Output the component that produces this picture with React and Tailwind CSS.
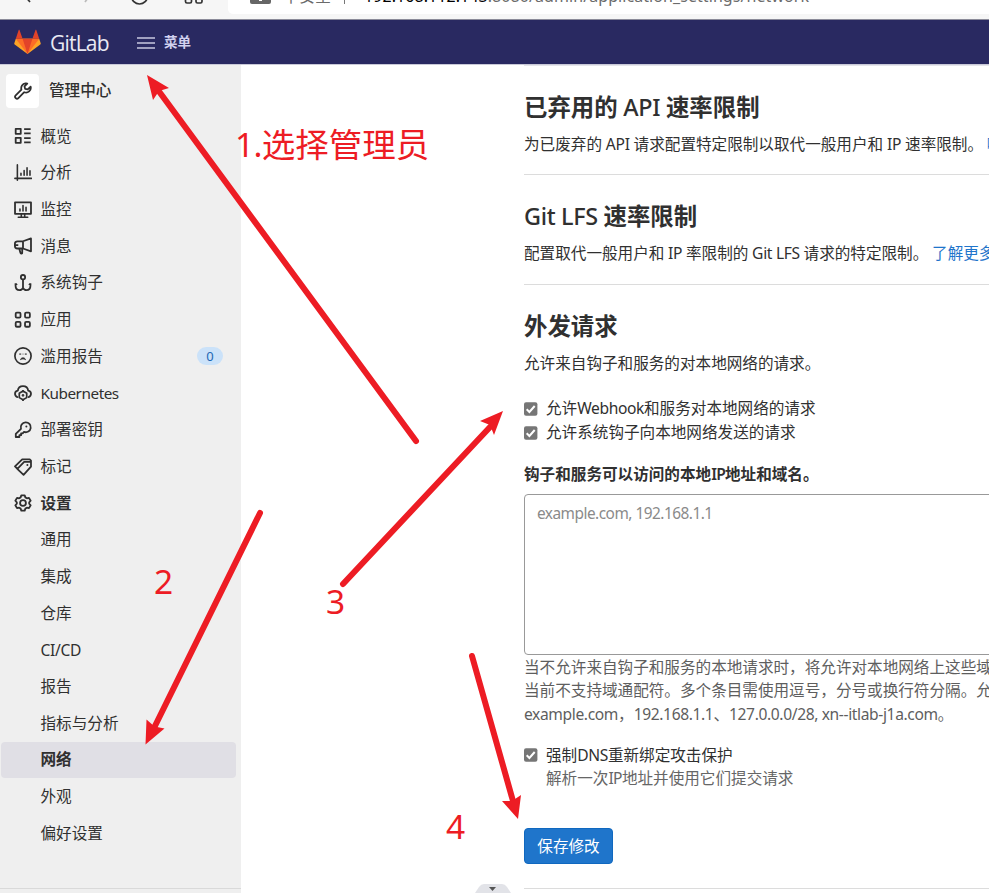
import React from "react";

const CJK = "font-['Noto_Sans','Noto_Sans_CJK_SC',sans-serif]";

function Mixed({ text, latin = "tracking-[-0.024em]" }) {
  return text.split(/([\x20-\x7e]+)/).map((part, i) =>
    i % 2 ? <span key={i} className={latin}>{part}</span> : part
  );
}

function Icon({ children, className = "h-[18px] w-[18px]" }) {
  return (
    <svg viewBox="0 0 16 16" className={`${className} shrink-0`} fill="none" stroke="#2f2f2f" strokeWidth="1.6" strokeLinejoin="round">
      {children}
    </svg>
  );
}

const icons = {
  overview: (
    <Icon>
      <rect x="1.5" y="1.6" width="4.5" height="4.5" /><rect x="1.5" y="9.6" width="4.5" height="4.5" />
      <path d="M9 1.9h5.800M9 5.700h5.800M9 9.900h5.800M9 13.700h5.800" strokeWidth="1.500" />
    </Icon>
  ),
  chart: (
    <Icon><path d="M3 .8v13.7M.8 12.8H15.5M6.2 10V8.3M9 10V5.8M11.6 10V3.3M14.2 10V6" strokeLinecap="round" strokeWidth="1.4" /></Icon>
  ),
  monitor: (
    <Icon>
      <rect x=".9" y="1.2" width="14.2" height="10.2" />
      <path d="M5.3 8.8V7.2M8 8.8V4M10.7 8.8V5.5M6.5 11.5v2.6M9.5 11.5v2.6M3.8 14.5h8.4" strokeWidth="1.4" strokeLinecap="round" />
    </Icon>
  ),
  horn: (
    <Icon>
      <path d="M8 3.8 15.1 1.3v11.4L8 10.2H3A2.2 2.2 0 0 1 .8 8V6A2.2 2.2 0 0 1 3 3.8zM8 3.8v6.4M4.7 10.4l1 3.6a.8.8 0 0 0 1.6-.2v-3.4M.8 7.2h3" />
    </Icon>
  ),
  anchor: (
    <Icon>
      <circle cx="8" cy="2.8" r="1.9" />
      <path d="M8 4.7v9.2M1.4 8.2v2.2c0 2.5 1.6 3.9 3.5 3.9 1.6 0 2.6-.8 3.1-2 .5 1.2 1.5 2 3.1 2 1.9 0 3.5-1.4 3.5-3.9V8.2M.8 10l2-1.2M15.2 10l-2-1.2" />
    </Icon>
  ),
  apps: (
    <Icon>
      <rect x="1.5" y="1.5" width="4.3" height="4.3" rx="1" /><rect x="9.8" y="1.5" width="4.3" height="4.3" rx="1" />
      <rect x="1.5" y="9.7" width="4.3" height="4.3" rx="1" /><rect x="9.8" y="9.7" width="4.3" height="4.3" rx="1" />
    </Icon>
  ),
  sad: (
    <Icon>
      <circle cx="8" cy="8" r="7.2" strokeWidth="1.5" />
      <path d="M5.7 11.3C6.1 10 7 9.6 8 9.6s1.9.4 2.3 1.7c-.8-.5-1.5-.7-2.3-.7s-1.5.2-2.3.7z" fill="#2f2f2f" strokeWidth=".6" />
      <path d="M4.9 6.3h1M7 6.3h.3M8.7 6.3h.3M10.1 6.3h1" strokeWidth="1.5" />
    </Icon>
  ),
  cloud: (
    <Icon>
      <path d="M3 11.6C1.7 11.1.9 10.1.9 8.7c0-1.5 1-2.7 2.5-2.9C3.7 3.4 5.6 1.8 8 1.8s4.3 1.6 4.6 4c1.5.2 2.5 1.4 2.5 2.9 0 1.4-.8 2.4-2.1 2.9" strokeLinecap="round" />
      <path d="m8 6.300 3.300 1.900v3.900L8 14l-3.300-1.900V8.200z" strokeWidth="1.500" />
      <path d="M8 5.300v1.200M8 13.800V15" strokeWidth="1.500" />
      <circle cx="8" cy="10.100" r=".9" fill="#2f2f2f" strokeWidth=".6" />
    </Icon>
  ),
  key: (
    <Icon>
      <path d="M10.2 1.2a4.400 4.400 0 1 1-1.3 8.5L7.7 11H6.300v1.600H4.800v1.600H1.600v-2.700l4.600-4.600a4.400 4.400 0 0 1 4-5.700z" />
      <circle cx="11" cy="4.9" r=".9" fill="#2f2f2f" stroke="none" />
    </Icon>
  ),
  tags: (
    <Icon>
      <path d="M9.6 1.3H14l1.1 1.100v5.300L8.500 15 2.900 9.700M3 9.600.9 7.500 7.300 1.200h4.400M3 9.600l6-6.100 3.500-.1M12.400 3.400l2.600.1" />
      <circle cx="11.9" cy="6.3" r=".9" fill="#2f2f2f" stroke="none" />
    </Icon>
  ),
  gear: (
    <Icon>
      <path d="M6.5 1.200h3l.6 1.800 1.300.8 1.900-.4 1.500 2.600-1.300 1.400v1.200l1.300 1.400-1.500 2.600-1.900-.4-1.300.8-.6 1.800h-3L5.900 13l-1.300-.8-1.900.4L1.200 10l1.300-1.400V7.400L1.200 6l1.500-2.600 1.900.4L5.900 3z" />
      <circle cx="8" cy="8" r="2.6" />
    </Icon>
  ),
};

const NAV = [
  ["overview", "概览"], ["chart", "分析"], ["monitor", "监控"], ["horn", "消息"], ["anchor", "系统钩子"],
  ["apps", "应用"], ["sad", "滥用报告", "0"], ["cloud", "Kubernetes"], ["key", "部署密钥"], ["tags", "标记"], ["gear", "设置"],
];
const SUB = ["通用", "集成", "仓库", "CI/CD", "报告", "指标与分析", "网络", "外观", "偏好设置"];

function BrowserBar() {
  return (
    <div className="flex h-[20px] shrink-0 overflow-hidden border-b border-[#8b8b99] bg-[#f6f6f6]">
      <svg className="h-[19px] w-[228px] shrink-0" viewBox="0 0 228 19" fill="none" strokeWidth="1.7">
        <path d="m24-5 6 7" stroke="#333" /><path d="m90-5-5 7" stroke="#bbb" />
        <circle cx="139.5" cy="-4" r="8" stroke="#333" />
        <rect x="185.5" y="-3" width="6" height="6" rx="1.5" stroke="#333" /><rect x="196" y="-3" width="6" height="6" rx="1.5" stroke="#333" />
      </svg>
      <div className="flex h-[14px] grow items-start whitespace-pre rounded-bl-[5px] bg-white pl-[22px] text-[#6b6b6b]">
        <svg className="h-[4px] w-[21px] shrink-0" viewBox="0 0 21 4"><path d="M0 0h21v2q0 2-2 2H2Q0 4 0 2z" fill="#666" /><path d="M9 0h3v1H9z" fill="#fff" /></svg>
        <span className="-mt-[14px] ml-[12px] w-[49px] text-[16px] leading-[20px]">不安全</span>
        <span className="ml-[12px] mr-[19px] h-[4px] w-px bg-[#777]" />
        <span className="-mt-[14px] text-[16px] leading-[20px] tracking-[0.07px]"><span className="text-black">192.168.112.143</span>:8080/admin/application_settings/network</span>
      </div>
    </div>
  );
}

function Header() {
  return (
    <header className="flex h-[45px] shrink-0 items-center border-b border-[#c9c9d8] bg-[#292961]">
      <svg className="ml-[14px] h-[26px] w-[27px]" viewBox="0 0 27 26">
        <path d="M13.500 25 .7 15.500a1 1 0 0 1-.4-1.200L1.800 9.800h23.400l1.500 4.500a1 1 0 0 1-.4 1.200z" fill="#fca326" />
        <path d="M13.500 25 1.800 9.800h23.400z" fill="#fc6d26" />
        <path d="M13.500 25 8.600 9.800h9.800z" fill="#e24329" />
        <path d="M1.800 9.800 4.600 1.200c.2-.5.900-.5 1 0l3 8.600zM25.200 9.800l-2.800-8.600c-.2-.5-.9-.5-1 0l-3 8.600z" fill="#e24329" />
      </svg>
      <span className="ml-[9px] mt-[2px] w-[60px] font-['Open_Sans'] text-[21px] font-medium leading-[28px] tracking-[-0.8px] text-[#e9e9f4]">GitLab</span>
      <svg className="ml-[27px] mt-px h-[14px] w-[18px]" viewBox="0 0 18 14" stroke="#c8c8e0" strokeWidth="1.5"><path d="M0 2h18M0 7h18M0 12h18" /></svg>
      <span className="ml-[9px] mt-px text-[13.5px] font-bold text-[#d1d1f0]">菜单</span>
    </header>
  );
}

function Sidebar() {
  return (
    <aside className="flex w-[241px] shrink-0 flex-col bg-[#efefef] text-[15.6px] text-[#303030]">
      <div className="mt-[9px] flex h-[34px] items-center pl-[6px]">
        <span className="flex h-[34px] w-[33px] items-center justify-center rounded bg-white">
          <Icon className="h-[18px] w-[18px]">
            <path d="M10.2 1.300a4.300 4.300 0 0 0-3.600 5.500L1.500 11.900a1.600 1.600 0 0 0 2.400 2.400l5.200-5.200a4.300 4.300 0 0 0 5.700-5l-2.600 2.500-2.300-.5-.6-2.300 2.500-2.400a4 4 0 0 0-1.600-.1z" />
          </Icon>
        </span>
        <span className="ml-[10px] font-medium">管理中心</span>
      </div>
      <nav className="mt-[10px] flex flex-col">
        {NAV.map(([icon, label, count]) => (
          <div key={label} className="flex h-[36.7px] items-center pl-[14px]">
            {icons[icon]}
            <span className={label === "设置" ? "ml-[8.5px] font-bold" : "ml-[8.5px]"}><Mixed text={label} latin="relative top-px text-[15.3px] tracking-[-0.03em]" /></span>
            {count && <span className="ml-auto mr-[18px] flex h-[18px] w-[26px] items-center justify-center rounded-full bg-[#cbe2f9] text-[13px] text-[#1f69b5]">{count}</span>}
          </div>
        ))}
        {SUB.map((label) => (
          <div key={label} className="flex h-[36.7px] items-center pl-px pr-[5px]">
            <div className={label === "网络" ? "flex h-[36px] grow items-center rounded bg-[#e0dfe5] pl-[39.5px] font-bold" : "pl-[39.5px]"}>
              <Mixed text={label} latin="relative top-px tracking-[-0.02em]" />
            </div>
          </div>
        ))}
      </nav>
      <div className="mt-auto h-[5px] border-t border-[#d9d9d9]" />
    </aside>
  );
}

function Check() {
  return (
    <svg className="h-[14px] w-[14px] shrink-0" viewBox="0 0 14 14"><rect x="0" y=".3" width="13.4" height="13.4" rx="2" fill="#767676" /><path d="m2.700 7.300 2.700 2.700L10.700 4" fill="none" stroke="#fff" strokeWidth="2" /></svg>
  );
}

function Option({ text }) {
  return (
    <label className="flex h-[24px] items-center gap-[8px]"><Check /><span><Mixed text={text} /></span></label>
  );
}

function Section({ title, className, children }) {
  return (
    <section className={`${className} border-b border-[#dcdcdc] pt-[24px]`}>
      <h4 className="text-[23.4px] font-bold leading-[34px]"><Mixed text={title} latin="font-medium tracking-[-0.014em]" /></h4>
      <p className="mt-[8px] leading-[24px]">{children}</p>
    </section>
  );
}

function Main() {
  return (
    <main className="flex grow flex-col overflow-hidden whitespace-nowrap pl-[283px] text-[15.6px] text-[#303030]">
      <div className="h-[2px] w-full border-t border-[#e4e4ea]" />
      <div className="-mt-px w-[600px]">
        <Section title="已弃用的 API 速率限制" className="h-[109px]">
          <Mixed text="为已废弃的 API 请求配置特定限制以取代一般用户和 IP 速率限制。 " latin="tracking-[-0.015em]" /><a className="text-[#1f75cb]">哪些请求?</a>
        </Section>
        <Section title="Git LFS 速率限制" className="h-[110px]">
          <Mixed text="配置取代一般用户和 IP 率限制的 Git LFS 请求的特定限制。 " latin="tracking-[-0.02em]" /><a className="text-[#1f75cb]">了解更多。</a>
        </Section>
        <h4 className="mt-[24px] text-[23.4px] font-bold leading-[34px]">外发请求</h4>
        <p className="mt-[8px] leading-[24px]">允许来自钩子和服务的对本地网络的请求。</p>
        <div className="mt-[22px]">
          <Option text="允许Webhook和服务对本地网络的请求" />
          <Option text="允许系统钩子向本地网络发送的请求" />
        </div>
        <p className="mt-[17px] font-bold leading-[24px]"><Mixed text="钩子和服务可以访问的本地IP地址和域名。" latin="font-semibold tracking-[-0.05em]" /></p>
        <div className="mt-[8px] h-[161px] rounded border-[1.5px] border-[#999] px-[12px] pt-[6px] leading-[24px] text-[#8a8a8a]">
          <Mixed text="example.com, 192.168.1.1" latin="text-[15.4px] tracking-[-0.033em]" />
        </div>
        <div className="pt-px leading-[23.4px] text-[#5e5e5e]">
          <p><Mixed text="当不允许来自钩子和服务的本地请求时，将允许对本地网络上这些域名和地址的请求。" /></p>
          <p><Mixed text="当前不支持域通配符。多个条目需使用逗号，分号或换行符分隔。允许使用范围。" /></p>
          <p><Mixed text="example.com，192.168.1.1、127.0.0.0/28, xn--itlab-j1a.com。" /></p>
        </div>
        <div className="mt-[17px]">
          <Option text="强制DNS重新绑定攻击保护" />
          <p className="pl-[22px] leading-[23px] text-[#666]"><Mixed text="解析一次IP地址并使用它们提交请求" latin="tracking-[-0.04em]" /></p>
        </div>
        <button className="mt-[38px] flex h-[36px] w-[89px] items-center justify-center rounded border border-[#1068bf] bg-[#1f75cb] text-white">保存修改</button>
        <div className="mt-[24px] border-t border-[#dcdcdc]" />
      </div>
    </main>
  );
}

function Annotations() {
  return (
    <div className="pointer-events-none absolute inset-0 text-[33.5px] leading-[40px] text-[#ed1c24]">
      <svg className="absolute inset-0" width="989" height="893" viewBox="0 0 989 893" fill="#ed1c24">
        <g stroke="#ed1c24" strokeWidth="6" strokeLinecap="round">
          <path d="M416 441 158 90M260 513 154 728M343 584l148-158M472 656l41 145" />
        </g>
        <path d="m147 75 22 13-10 3-6 9zM145.500 744.500l1-25 8 7 10 2zM503 411l-9 24-4-10-10-4zM518 819l-16-18 10 0 9-6z" />
      </svg>
      <span className="absolute left-[235px] top-[124px] whitespace-nowrap"><Mixed text="1.选择管理员" latin="tracking-[-0.02em]" /></span>
      <span className="absolute left-[154px] top-[561px]">2</span>
      <span className="absolute left-[326px] top-[581px]">3</span>
      <span className="absolute left-[446px] top-[806px]">4</span>
      <svg className="absolute bottom-0 left-[475px]" width="36" height="9" viewBox="0 0 36 9"><path d="M0 9 4 3q2-3 5-3h18q3 0 5 3l4 6z" fill="#e2e3e8" /><path d="M14 3h7l-3.5 4z" fill="#555" /></svg>
    </div>
  );
}

export default function App() {
  return (
    <div className={`${CJK} relative flex h-[893px] w-[989px] flex-col overflow-hidden bg-white`}>
      <BrowserBar />
      <Header />
      <div className="flex min-h-0 grow">
        <Sidebar />
        <Main />
      </div>
      <Annotations />
    </div>
  );
}
